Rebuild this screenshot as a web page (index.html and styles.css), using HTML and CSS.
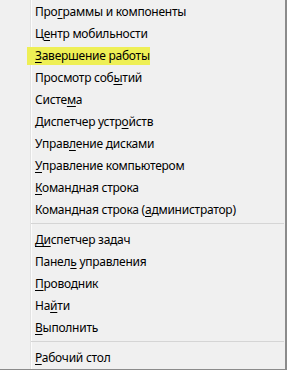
FILE: index.html
```html
<!DOCTYPE html>
<html lang="ru">
<head>
  <meta charset="UTF-8">
  <title>Меню</title>
  <link rel="stylesheet" href="styles.css">
</head>
<body>
  <div class="menu">
    <div class="item">Про<u>г</u>раммы и компоненты</div>
    <div class="item">Ц<u>е</u>нтр мобильности</div>
    <div class="item"><span class="mark"><u>З</u>авершение работы</span></div>
    <div class="item">Просмотр соб<u>ы</u>тий</div>
    <div class="item">Систе<u>м</u>а</div>
    <div class="item">Диспетчер устр<u>о</u>йств</div>
    <div class="item">Управ<u>л</u>ение дисками</div>
    <div class="item"><u>У</u>правление компьютером</div>
    <div class="item"><u>К</u>омандная строка</div>
    <div class="item">Командная строка (<u>а</u>дминистратор)</div>
    <div class="sep"></div>
    <div class="item"><u>Ди</u>спетчер задач</div>
    <div class="item">Панел<u>ь</u> управления</div>
    <div class="item"><u>П</u>роводник</div>
    <div class="item">На<u>й</u>ти</div>
    <div class="item"><u>В</u>ыполнить</div>
    <div class="sep"></div>
    <div class="item"><u>Р</u>абочий стол</div>
  </div>
</body>
</html>
```

FILE: styles.css
```css
body {
  margin: 0;
  background-color: #f0f0f0;
  font-family: "Noto Sans", "Open Sans", sans-serif;
  font-size: 12px;
  letter-spacing: -0.25px;
  color: #000;
}
.menu {
  width: 287px;
  height: 370px;
  box-sizing: border-box;
  padding-top: 1px;
  border-right: 2px solid #8b8b8b;
  border-bottom: 1px solid #8b8b8b;
  display: flex;
  flex-direction: column;
  background: linear-gradient(to right, transparent 30px, #e2e2e2 30px, #e2e2e2 31px, #fcfcfc 31px, #fcfcfc 32px, transparent 32px);
}
.item {
  height: 22px;
  line-height: 22px;
  padding-left: 35px;
  white-space: nowrap;
}
.item u {
  text-underline-offset: 2px;
}
.mark {
  background-color: #eeef55;
  padding: 0 0 0 8px;
  margin-left: -8px;
  display: inline-block;
  line-height: 18px;
}
.sep {
  height: 8px;
  margin: 0 1px 0 31px;
  box-sizing: border-box;
  border-top: 2px solid transparent;
}
.sep::after {
  content: "";
  display: block;
  height: 1px;
  background-color: #d5d5d5;
}
```
